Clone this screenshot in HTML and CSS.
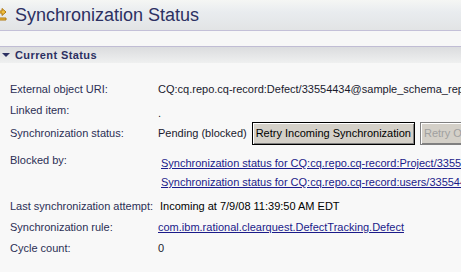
FILE: index.html
```html
<!DOCTYPE html>
<html lang="en">
<head>
    <meta charset="UTF-8">
    <title>Synchronization Status</title>
    <link rel="stylesheet" href="styles.css">
</head>
<body>

<div class="form">
    <div class="title-bar">
        <svg class="title-icon" width="16" height="16" viewBox="0 0 16 16">
            <path d="M2 4h8V1.5l4 3.5-4 3.5V6H2z" fill="#f0c040" stroke="#b07810" stroke-width="1"/>
            <path d="M14 11H6V8.5L2 12l4 3.5V13h8z" fill="#f0c040" stroke="#b07810" stroke-width="1"/>
        </svg>
        <h1>Synchronization Status</h1>
    </div>
    <div class="spacer"></div>

    <div class="section-head">
        <span class="twisty"></span>
        <h2>Current Status</h2>
    </div>

    <div class="details">
        <div class="label">External object URI:</div>
        <div class="value">CQ:cq.repo.cq-record:Defect/33554434@sample_schema_repo/SAMPL</div>

        <div class="label">Linked item:</div>
        <div class="value dot">.</div>

        <div class="label tall">Synchronization status:</div>
        <div class="value buttons">
            <span>Pending (blocked)</span>
            <button class="btn focused">Retry Incoming Synchronization</button>
            <button class="btn" disabled>Retry Outgoing Synchronization</button>
        </div>

        <div class="label top">Blocked by:</div>
        <div class="value links">
            <a href="#">Synchronization status for CQ:cq.repo.cq-record:Project/33554433@sample</a>
            <a href="#">Synchronization status for CQ:cq.repo.cq-record:users/33554434@sample</a>
        </div>

        <div class="label">Last synchronization attempt:</div>
        <div class="value plain">Incoming at 7/9/08 11:39:50 AM EDT</div>

        <div class="label">Synchronization rule:</div>
        <div class="value"><a href="#">com.ibm.rational.clearquest.DefectTracking.Defect</a></div>

        <div class="label">Cycle count:</div>
        <div class="value">0</div>
    </div>
</div>

</body>
</html>
```

FILE: styles.css
```css
* {
    box-sizing: border-box;
}
body {
    margin: 0;
    font-family: "Liberation Sans", Arial, sans-serif;
    font-size: 11px;
    background: #f8f8f8;
    overflow: hidden;
}
.form {
    width: 461px;
    height: 272px;
    overflow: hidden;
}
.title-bar {
    display: flex;
    align-items: center;
    height: 31px;
    border-bottom: 1px solid #c4c0d8;
    background: linear-gradient(#f5f6f4, #e9ecef 40%, #e2e4e5);
}
.title-icon {
    margin-left: -8px;
    margin-right: 7px;
    flex: none;
}
h1 {
    margin: 0;
    font-size: 18px;
    font-weight: normal;
    color: #2c3062;
}
.spacer {
    height: 16px;
    border-bottom: 1px solid #c0bcd4;
    background: #f7f7f7;
}
.section-head {
    display: flex;
    align-items: center;
    height: 16px;
    background: linear-gradient(#dbdcde, #eff0f0);
}
.twisty {
    width: 0;
    height: 0;
    margin: 0 5px 0 2px;
    border-left: 4px solid transparent;
    border-right: 4px solid transparent;
    border-top: 4px solid #2c3062;
}
h2 {
    margin: 0;
    font-size: 11px;
    font-weight: bold;
    letter-spacing: 0.4px;
    color: #2c3062;
}
.details {
    display: grid;
    grid-template-columns: 148px 1fr;
    padding: 15px 0 0 10px;
    color: #2b2f55;
    white-space: nowrap;
}
.label {
    height: 21px;
    display: flex;
    align-items: center;
}
.label.tall {
    height: 26px;
}
.label.top {
    height: auto;
    align-items: flex-start;
    padding-top: 8px;
}
.value {
    display: flex;
    align-items: center;
    height: 21px;
    color: #1a1a2e;
}
.dot {
    padding-top: 6px;
}
.buttons {
    height: 26px;
    gap: 5px;
}
.btn {
    font-family: inherit;
    font-size: 11px;
    height: 23px;
    padding: 0 3px;
    background: #d4d0c8;
    color: #000;
    border: 1px solid #000;
    box-shadow: inset 1px 1px 0 #fff, inset -1px -1px 0 #808080;
    white-space: nowrap;
}
.btn[disabled] {
    color: #a0a0a0;
    border-color: #808080;
}
.links {
    height: auto;
    flex-direction: column;
    align-items: flex-start;
    padding: 8px 0 3px 3px;
}
.links a {
    line-height: 19px;
}
a {
    color: #1b1b8a;
}
.plain {
    padding-left: 2px;
    color: #000;
}
```
